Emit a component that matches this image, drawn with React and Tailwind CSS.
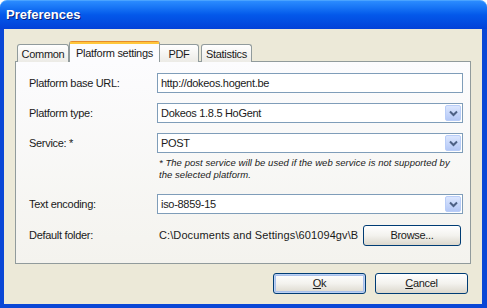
import React from 'react';

// XP-style combo arrow
const ComboArrow = () => (
  <div className="w-[16px] h-[16px] my-[1px] mr-[1px] rounded-[2px] border border-[#b9cdf8] bg-gradient-to-b from-[#dbe6fe] to-[#b4c8f6] flex items-center justify-center">
    <svg width="9" height="7" viewBox="0 0 9 7">
      <path d="M1 1.5 L4.5 5 L8 1.5" fill="none" stroke="#4d6185" strokeWidth="2" />
    </svg>
  </div>
);

const TextBox = ({ value }) => (
  <div className="h-[20px] border border-[#7f9db9] bg-white flex items-center pl-[3px] whitespace-nowrap">
    {value}
  </div>
);

const Combo = ({ value }) => (
  <div className="h-[20px] border border-[#7f9db9] bg-white flex items-center">
    <span className="flex-1 pl-[3px] whitespace-nowrap">{value}</span>
    <ComboArrow />
  </div>
);

const XpButton = ({ children, isDefault, className = '' }) => (
  <div
    className={`h-[21px] rounded-[3px] border border-[#003c74] bg-gradient-to-b from-[#ffffff] via-[#f3f2ee] to-[#dcd8cd] flex items-center justify-center ${
      isDefault ? 'shadow-[inset_0_0_0_1px_#bcd1f4,inset_0_0_0_2px_#a8c0ea]' : ''
    } ${className}`}
  >
    {children}
  </div>
);

const App = () => {
  return (
    <div className="w-[487px] h-[308px] flex flex-col font-['Liberation_Sans',Arial,sans-serif] text-[11px] tracking-[-0.3px] text-[#1a1a1a] overflow-hidden">
      {/* title bar */}
      <div className="h-[29px] shrink-0 rounded-t-[7px] bg-gradient-to-b from-[#2b8cff] via-[#0458ea] to-[#0341d8] flex items-center pl-[6px] border-t border-[#4aa3ff]">
        <span className="text-white font-bold text-[13px] tracking-normal [text-shadow:1px_1px_0_#0a2078]">
          Preferences
        </span>
      </div>

      {/* client area */}
      <div className="flex-1 flex flex-col bg-[#ece9d8] border-l-4 border-r-[5px] border-b-4 border-[#0a47d6] px-[11px] pt-[12px]">
        {/* tabs */}
        <div className="flex items-end pl-[2px] h-[21px] relative z-10 -mb-px">
          <div className="w-[52px] h-[18px] border border-b-0 border-[#919b9c] rounded-t-[3px] bg-gradient-to-b from-white to-[#ecebe6] flex items-center justify-center pt-[1px]">
            Common
          </div>
          <div className="w-[91px] h-[21px] border border-b-0 border-[#919b9c] border-t-[#e68b2c] rounded-t-[3px] bg-[#fcfcfe] flex flex-col">
            <div className="h-[2px] bg-[#ffc73c] shrink-0" />
            <div className="flex-1 flex items-start justify-center pt-[1px]">Platform settings</div>
          </div>
          <div className="w-[39px] h-[18px] border border-b-0 border-l-0 border-[#919b9c] rounded-tr-[3px] bg-gradient-to-b from-white to-[#ecebe6] flex items-center justify-center pt-[1px]">
            PDF
          </div>
          <div className="w-[51px] h-[18px] ml-[2px] border border-b-0 border-[#919b9c] rounded-t-[3px] bg-gradient-to-b from-white to-[#ecebe6] flex items-center justify-center pt-[1px]">
            Statistics
          </div>
          <div className="flex-1 h-px bg-[#919b9c]" />
        </div>

        {/* panel */}
        <div className="h-[203px] shrink-0 border border-[#919b9c] bg-gradient-to-b from-[#fcfcfe] to-[#f4f3ee] pt-[11px] pl-[13px] pr-[7px] flex flex-col">
          <div className="flex items-center">
            <div className="w-[128px]">Platform base URL:</div>
            <div className="flex-1"><TextBox value="http://dokeos.hogent.be" /></div>
          </div>
          <div className="flex items-center mt-[10px]">
            <div className="w-[128px]">Platform type:</div>
            <div className="flex-1"><Combo value="Dokeos 1.8.5 HoGent" /></div>
          </div>
          <div className="flex items-center mt-[10px]">
            <div className="w-[128px]">Service: *</div>
            <div className="flex-1"><Combo value="POST" /></div>
          </div>
          <div className="flex mt-[4px]">
            <div className="w-[128px]" />
            <p className="flex-1 italic text-[9.5px] leading-[12px] tracking-[0.05px] pl-[2px]">
              * The post service will be used if the web service is not supported by
              <br />
              the selected platform.
            </p>
          </div>
          <div className="flex items-center mt-[13px]">
            <div className="w-[128px]">Text encoding:</div>
            <div className="flex-1"><Combo value="iso-8859-15" /></div>
          </div>
          <div className="flex items-center mt-[11px]">
            <div className="w-[128px]">Default folder:</div>
            <div className="w-[202px] pl-[2px] whitespace-nowrap tracking-[0.1px]">
              C:\Documents and Settings\601094gv\B
            </div>
            <XpButton className="w-[98px] ml-[4px]">Browse...</XpButton>
          </div>
        </div>

        {/* dialog buttons */}
        <div className="flex justify-end gap-[9px] mt-[9px] pr-[3px]">
          <XpButton isDefault className="w-[93px]">
            <span><span className="underline">O</span>k</span>
          </XpButton>
          <XpButton className="w-[93px]">
            <span><span className="underline">C</span>ancel</span>
          </XpButton>
        </div>
      </div>
    </div>
  );
};

export default App;
